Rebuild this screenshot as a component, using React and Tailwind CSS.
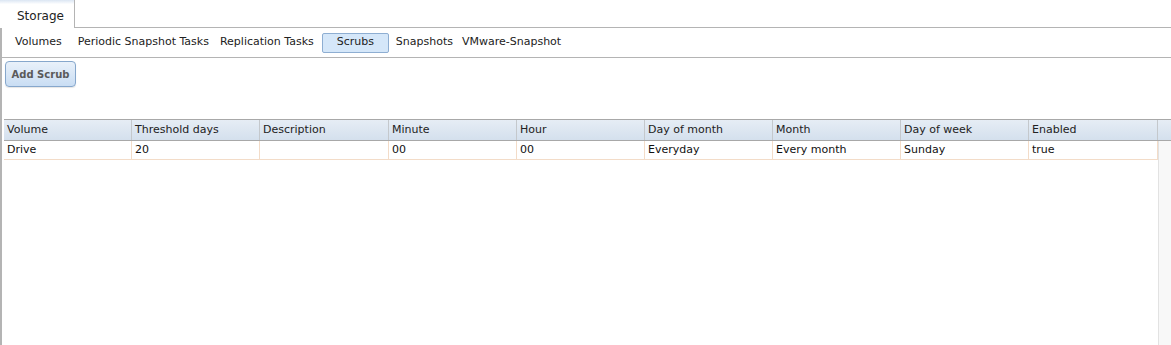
const columns = [
  { label: "Volume", value: "Drive", w: "w-[128px]" },
  { label: "Threshold days", value: "20", w: "w-[128px]" },
  { label: "Description", value: "", w: "w-[129px]" },
  { label: "Minute", value: "00", w: "w-[128px]" },
  { label: "Hour", value: "00", w: "w-[128px]" },
  { label: "Day of month", value: "Everyday", w: "w-[128px]" },
  { label: "Month", value: "Every month", w: "w-[128px]" },
  { label: "Day of week", value: "Sunday", w: "w-[128px]" },
  { label: "Enabled", value: "true", w: "w-[129px]" },
];

export default function App() {
  return (
    <div className="w-[1171px] h-[345px] overflow-hidden bg-white flex flex-col font-['DejaVu_Sans',Verdana,sans-serif] text-[11px] text-[#222]">
      {/* TOP TAB */}
      <div className="h-[28px] flex shrink-0">
        <div className="w-[75px] h-full border-r border-[#b4b4b4] bg-gradient-to-b from-[#dbe6f3] via-white via-[15%] to-white flex items-center pl-[17px] pt-[4px] text-[12px]">
          Storage
        </div>
        <div className="flex-1 border-b border-[#b4b4b4]" />
      </div>

      {/* BODY */}
      <div className="flex-1 flex flex-col border-l-2 border-[#b4b4b4] min-h-0">
        {/* SUB NAV */}
        <div className="h-[30px] shrink-0 border-b border-[#b4b4b4] flex items-center">
          <span className="ml-[13px]">Volumes</span>
          <span className="ml-[16px]">Periodic Snapshot Tasks</span>
          <span className="ml-[11px]">Replication Tasks</span>
          <span className="ml-[8px] h-[20px] w-[67px] flex items-center justify-center rounded-[2px] border border-[#8eaed2] bg-[#d5e7f9]">
            Scrubs
          </span>
          <span className="ml-[7px]">Snapshots</span>
          <span className="ml-[9px]">VMware-Snapshot</span>
        </div>

        {/* TOOLBAR */}
        <div className="h-[61px] shrink-0 pt-[3px] pl-[3px]">
          <button className="w-[71px] h-[26px] rounded-[4px] border border-[#86a7cc] bg-gradient-to-b from-[#e9f1fa] to-[#c9ddf3] font-bold text-[10px] text-[#5a5a5a] shadow-[0_1px_1px_rgba(0,0,0,0.1)]">
            Add Scrub
          </button>
        </div>

        {/* GRID */}
        <div className="flex-1 flex flex-col ml-[2px] border-t border-[#a8a8a8] min-h-0">
          <div className="h-[21px] shrink-0 flex border-b border-[#a8a8a8] bg-gradient-to-b from-[#e6edf5] to-[#d4e0ed]">
            {columns.map((c) => (
              <div
                key={c.label}
                className={`${c.w} shrink-0 border-r border-[#c4c8cc] pl-[3px] pt-px flex items-center`}
              >
                {c.label}
              </div>
            ))}
            <div className="flex-1" />
          </div>
          <div className="flex-1 flex min-h-0">
            <div className="w-[1154px] shrink-0">
              <div className="h-[19px] flex border-b border-r border-[#f3dcc8] text-[#111]">
                {columns.map((c, i) => (
                  <div
                    key={c.label}
                    className={`${c.w} shrink-0 pl-[3px] pt-px flex items-center ${
                      i < columns.length - 1 ? "border-r border-[#f3dcc8]" : ""
                    }`}
                  >
                    {c.value}
                  </div>
                ))}
              </div>
            </div>
            <div className="flex-1 bg-[#f8f8f8] border-l border-[#e2e2e2]" />
          </div>
        </div>
      </div>
    </div>
  );
}
